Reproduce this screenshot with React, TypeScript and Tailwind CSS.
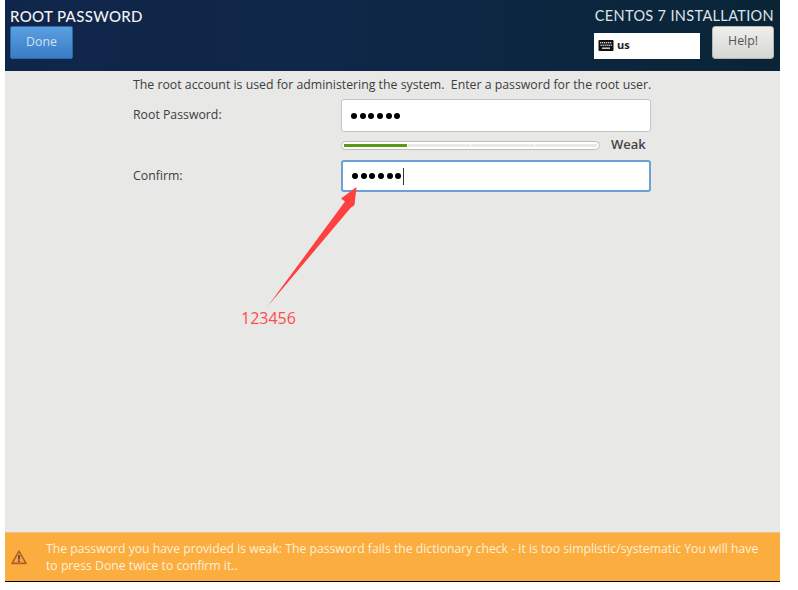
import { Fragment } from 'react'

const bodyFont = "font-['Open_Sans','Noto_Sans',sans-serif]"

function Dots({ caret }: { caret?: boolean }) {
  return (
    <div className="flex items-center gap-[2.7px] pl-[9px]">
      {[0, 1, 2, 3, 4, 5].map((i) => (
        <span key={i} className="w-[6px] h-[6px] rounded-full bg-black" />
      ))}
      {caret && <span className="w-px h-[17px] bg-[#333] -ml-[1px]" />}
    </div>
  )
}

function KeyboardIcon() {
  return (
    <svg width="16" height="11" viewBox="0 0 15 11">
      <rect x="0" y="0" width="15" height="11" rx="1" fill="#111" />
      {[1.5, 3.5, 5.5, 7.5, 9.5, 11.5].map((x) => (
        <Fragment key={x}>
          <rect x={x} y="2" width="1.3" height="1.3" fill="#ddd" />
          <rect x={x + 0.5} y="4.6" width="1.3" height="1.3" fill="#ddd" />
        </Fragment>
      ))}
      <rect x="3.5" y="7.5" width="8" height="1.4" fill="#ddd" />
    </svg>
  )
}

export default function App() {
  return (
    <div className={`relative w-[798px] h-[590px] bg-white pl-[5px] overflow-hidden ${bodyFont}`}>
      <div className="w-[775px] h-[582px] flex flex-col border-b border-black">
        <header className="h-[71px] shrink-0 flex justify-between bg-gradient-to-r from-[#10254a] via-[#0e2747] to-[#0a2436] pl-[5px] pr-[6px]">
          <div className="flex flex-col">
            <h1 className="text-[15px] leading-[16px] mt-[8px] font-medium text-[#f2f2f2] font-['Lato',sans-serif] tracking-[0.35px]">ROOT PASSWORD</h1>
            <button className="mt-[2px] w-[63px] h-[33px] rounded-[2px] border border-[#2a69a8] bg-gradient-to-b from-[#5a9fe0] to-[#3a7cc6] text-[12.3px] text-[#cfe0f2]">
              Done
            </button>
          </div>
          <div className="flex flex-col items-end">
            <div className="text-[14.5px] leading-[16px] mt-[8px] text-[#dfe3e8] font-['Lato',sans-serif] tracking-[0.35px]">CENTOS 7 INSTALLATION</div>
            <div className="flex items-center gap-[12px] mt-[2px]">
              <div className="w-[106px] h-[26px] mt-[6px] bg-white flex items-center gap-[3px] pl-[4px]">
                <KeyboardIcon />
                <span className="text-[11px] font-bold text-[#222]">us</span>
              </div>
              <button className="w-[62px] h-[33px] rounded-[3px] border border-[#b5b5b1] bg-gradient-to-b from-[#efefed] to-[#d6d6d3] text-[12.3px] text-[#555] pb-[2px]">
                Help!
              </button>
            </div>
          </div>
        </header>

        <main className="flex-1 bg-[#e8e8e6] pl-[128px] text-[#3d3d3d] text-[12.3px]">
          <p className="mt-[5px] leading-[17px] whitespace-pre">The root account is used for administering the system.  Enter a password for the root user.</p>
          <div className="flex items-center mt-[6px]">
            <label className="w-[208px]">Root Password:</label>
            <div className="w-[310px] h-[33px] bg-white border border-[#c4c4c1] rounded-[3px] flex items-center">
              <Dots />
            </div>
          </div>
          <div className="flex items-center ml-[208px] mt-[5px] h-[16px]">
            <div className="w-[259px] h-[9px] p-[2px] flex gap-[1px] bg-white border border-[#bcbcb9] rounded-full">
              <div className="flex-1 bg-[#5a9a16]" />
              <div className="flex-1 bg-[#e9e9e7]" />
              <div className="flex-1 bg-[#e9e9e7]" />
              <div className="flex-1 bg-[#e9e9e7]" />
            </div>
            <span className="ml-[11px] text-[13px] font-semibold text-[#444]">Weak</span>
          </div>
          <div className="flex items-center mt-[7px]">
            <label className="w-[208px]">Confirm:</label>
            <div className="w-[310px] h-[32px] bg-white border-2 border-[#6b9fd8] rounded-[3px] flex items-center">
              <Dots caret />
            </div>
          </div>
        </main>

        <footer className="h-[49px] shrink-0 flex items-center bg-[#fbad3f] border-t border-[#e8c48a]">
          <svg className="ml-[6px] shrink-0" width="16" height="15" viewBox="0 0 16 15">
            <path d="M8 1.2 15 13.4H1Z" fill="#f0a35a" stroke="#b85f12" strokeWidth="1.6" strokeLinejoin="round" />
            <rect x="7.2" y="5" width="1.6" height="4.6" fill="#5a3a18" />
            <rect x="7.2" y="10.4" width="1.6" height="1.6" fill="#5a3a18" />
          </svg>
          <p className="ml-[19px] w-[722px] text-[12.23px] leading-[17px] text-[#fdf0da]">
            The password you have provided is weak: The password fails the dictionary check - it is too simplistic/systematic You will have to press Done twice to confirm it..
          </p>
        </footer>
      </div>

      {/* red annotation drawn over the screenshot */}
      <svg className="absolute left-0 top-0 pointer-events-none" width="798" height="590" viewBox="0 0 798 590">
        <path d="M356.500 187 341 198.500 345 201.500 267.500 306.500 350.500 208 354.500 205Z" fill="#ff4040" />
      </svg>
      <span className="absolute left-[241px] top-[307px] text-[16px] leading-[22px] text-[#ff4d4d]">123456</span>
    </div>
  )
}
